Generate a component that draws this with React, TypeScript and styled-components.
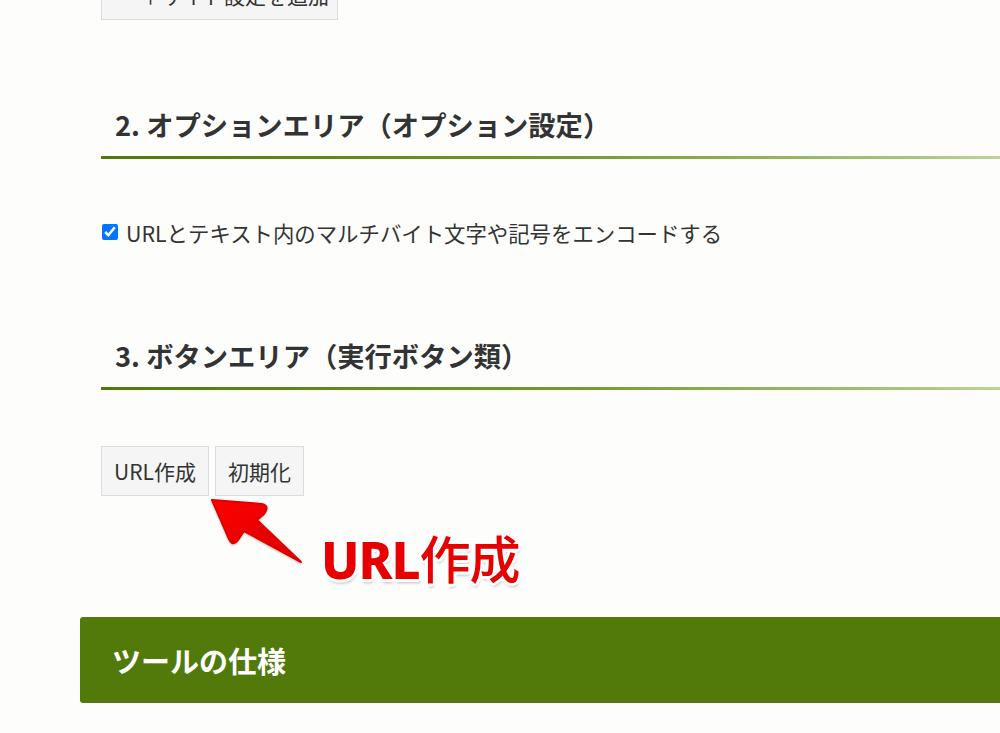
import React from 'react';
import styled, { createGlobalStyle } from 'styled-components';

const GlobalStyle = createGlobalStyle`
  html, body {
    margin: 0;
    padding: 0;
    background: #fdfdfc;
    overflow: hidden;
  }
  body {
    font-family: 'Noto Sans CJK JP', 'Noto Sans', sans-serif;
    color: #333;
  }
`;

const Page = styled.div`
  position: relative;
  width: 1000px;
  height: 733px;
  overflow: hidden;
  padding-left: 101px;
  box-sizing: border-box;
`;

const Button = styled.button<{ $cut?: boolean }>`
  display: inline-flex;
  align-items: center;
  height: 50px;
  padding: 0 12px;
  margin-top: ${(p) => (p.$cut ? '-30px' : '0')};
  background: #f5f5f5;
  border: 1px solid #dcdcdc;
  border-radius: 0;
  font-family: inherit;
  font-size: 21px;
  font-weight: 400;
  color: #333;
  white-space: nowrap;
  box-sizing: border-box;
`;

const TopRow = styled.div`
  display: flex;
`;

const SectionTitle = styled.h2<{ $top: number }>`
  position: relative;
  margin: ${(p) => p.$top}px 0 0;
  padding: 0 0 13px 14px;
  font-size: 27.3px;
  line-height: 38px;
  font-weight: 700;
  color: #333;
  &::after {
    content: '';
    position: absolute;
    left: 0;
    right: -120px;
    bottom: -3px;
    height: 3px;
    background: linear-gradient(to right, #4d7a08 0%, #6f9a2e 45%, #a9c77c 80%, #d6e6bf 100%);
  }
`;

const OptionRow = styled.label`
  display: flex;
  align-items: center;
  gap: 8px;
  margin-top: 61px;
  height: 30px;
  font-size: 21.4px;
  color: #333;
`;

const Check = styled.input`
  width: 16px;
  height: 16px;
  margin: 0 0 0 1px;
  accent-color: #0075ff;
`;

const ButtonRow = styled.div`
  display: flex;
  gap: 6px;
  margin-top: 59px;
`;

const Banner = styled.div`
  margin: 121px 0 0 -21px;
  height: 86px;
  display: flex;
  align-items: center;
  padding-left: 32px;
  background: #517a0b;
  border-radius: 3px 0 0 3px;
  color: #fff;
  font-size: 29px;
  font-weight: 700;
`;

const Arrow = styled.svg`
  position: absolute;
  left: 200px;
  top: 490px;
  filter: drop-shadow(0 1px 1px rgba(0, 0, 0, 0.25));
`;

const Callout = styled.div`
  position: absolute;
  left: 321px;
  top: 524px;
  font-size: 51px;
  line-height: 66px;
  color: #e60000;
  letter-spacing: -1px;
  text-shadow:
    0 0 2px #fff, 2px 2px 0 #fff, -2px -2px 0 #fff, 2px -2px 0 #fff, -2px 2px 0 #fff,
    3px 0 0 #fff, -3px 0 0 #fff, 0 3px 0 #fff, 0 -3px 0 #fff,
    1px 4px 3px rgba(0, 0, 0, 0.25);
`;

const Strong = styled.span`
  font-family: 'Noto Sans', 'Noto Sans CJK JP', sans-serif;
  font-weight: 800;
`;

const Kanji = styled.span`
  font-weight: 500;
`;

export default function App() {
  return (
    <>
      <GlobalStyle />
      <Page>
        <TopRow>
          <Button $cut style={{ width: 237 }}>
            <span style={{ paddingLeft: 26 }}>＋サイト設定を追加</span>
          </Button>
        </TopRow>

        <SectionTitle $top={85}>2. オプションエリア（オプション設定）</SectionTitle>

        <OptionRow>
          <Check type="checkbox" defaultChecked />
          URLとテキスト内のマルチバイト文字や記号をエンコードする
        </OptionRow>

        <SectionTitle $top={89}>3. ボタンエリア（実行ボタン類）</SectionTitle>

        <ButtonRow>
          <Button>URL作成</Button>
          <Button>初期化</Button>
        </ButtonRow>

        <Banner>ツールの仕様</Banner>

        <Arrow width="110" height="80" viewBox="0 0 110 80">
          <defs>
            <linearGradient id="ag" x1="0" y1="0" x2="1" y2="1">
              <stop offset="0" stopColor="#f00" />
              <stop offset="1" stopColor="#d80000" />
            </linearGradient>
          </defs>
          <path
            d="M12 10 L62 14 Q70 16 64 24 L57 30 L101 72 L44 41 L38 50 Q33 57 29 49 Z"
            fill="url(#ag)"
            stroke="#e00000"
            strokeWidth="2"
            strokeLinejoin="round"
          />
        </Arrow>

        <Callout>
          <Strong>URL</Strong>
          <Kanji>作成</Kanji>
        </Callout>
      </Page>
    </>
  );
}
